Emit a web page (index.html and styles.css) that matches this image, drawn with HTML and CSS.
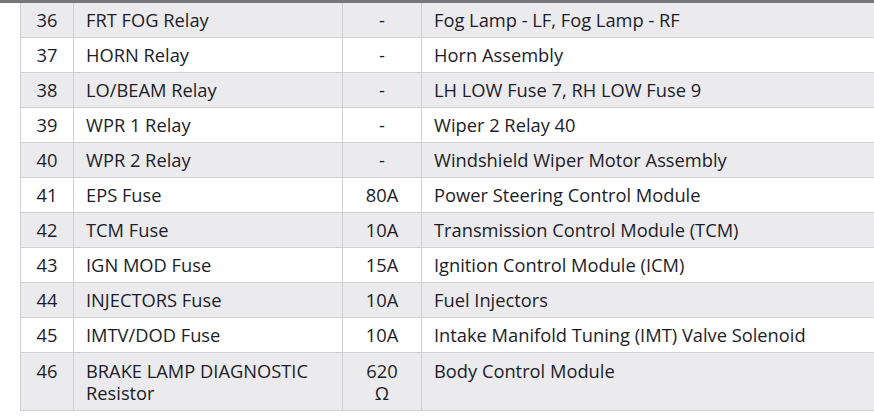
FILE: index.html
```html
<!DOCTYPE html>
<html>
<head>
<meta charset="utf-8">
<link rel="stylesheet" href="styles.css">
</head>
<body>
<div class="topbar"></div>
<div class="wrap">
<table class="fuses">
<colgroup><col class="c1"><col class="c2"><col class="c3"><col class="c4"></colgroup>
<tr class="odd"><td class="num">36</td><td>FRT FOG Relay</td><td class="amp">-</td><td>Fog Lamp - LF, Fog Lamp - RF</td></tr>
<tr><td class="num">37</td><td>HORN Relay</td><td class="amp">-</td><td>Horn Assembly</td></tr>
<tr class="odd"><td class="num">38</td><td>LO/BEAM Relay</td><td class="amp">-</td><td>LH LOW Fuse 7, RH LOW Fuse 9</td></tr>
<tr><td class="num">39</td><td>WPR 1 Relay</td><td class="amp">-</td><td>Wiper 2 Relay 40</td></tr>
<tr class="odd"><td class="num">40</td><td>WPR 2 Relay</td><td class="amp">-</td><td>Windshield Wiper Motor Assembly</td></tr>
<tr><td class="num">41</td><td>EPS Fuse</td><td class="amp">80A</td><td>Power Steering Control Module</td></tr>
<tr class="odd"><td class="num">42</td><td>TCM Fuse</td><td class="amp">10A</td><td>Transmission Control Module (TCM)</td></tr>
<tr><td class="num">43</td><td>IGN MOD Fuse</td><td class="amp">15A</td><td>Ignition Control Module (ICM)</td></tr>
<tr class="odd"><td class="num">44</td><td>INJECTORS Fuse</td><td class="amp">10A</td><td>Fuel Injectors</td></tr>
<tr><td class="num">45</td><td>IMTV/DOD Fuse</td><td class="amp">10A</td><td>Intake Manifold Tuning (IMT) Valve Solenoid</td></tr>
<tr class="odd last"><td class="num">46</td><td>BRAKE LAMP DIAGNOSTIC Resistor</td><td class="amp wrapamp">620 Ω</td><td>Body Control Module</td></tr>
</table>
</div>
</body>
</html>
```
FILE: styles.css
```css
html, body {
  margin: 0;
  padding: 0;
  background: #ffffff;
  overflow: hidden;
  width: 874px;
  height: 417px;
}
.topbar {
  height: 3px;
  background: #777777;
}
.wrap {
  margin-left: 20px;
  width: 880px;
}
.fuses {
  border-collapse: collapse;
  table-layout: fixed;
  width: 880px;
  font-family: "Open Sans", "Noto Sans", sans-serif;
  font-size: 18.3px;
  color: #1c1c2a;
  border-left: 1px solid #cfcfcf;
}
.c1 { width: 53px; }
.c2 { width: 269px; }
.c3 { width: 79px; }
.c4 { width: 479px; }
.fuses td {
  border-right: 1px solid #cfcfcf;
  border-bottom: 1px solid #cfcfcf;
  padding: 6px 12px;
  line-height: 22px;
  vertical-align: top;
  background: #ffffff;
  white-space: nowrap;
}
.fuses tr.odd td {
  background: #ebebed;
}
.fuses td.num,
.fuses td.amp {
  text-align: center;
  padding-left: 2px;
  padding-right: 2px;
}
.fuses tr.last td {
  padding-top: 7px;
  padding-bottom: 6px;
  white-space: normal;
}
.fuses tr.last td.wrapamp {
  padding-left: 16px;
  padding-right: 16px;
}
```
